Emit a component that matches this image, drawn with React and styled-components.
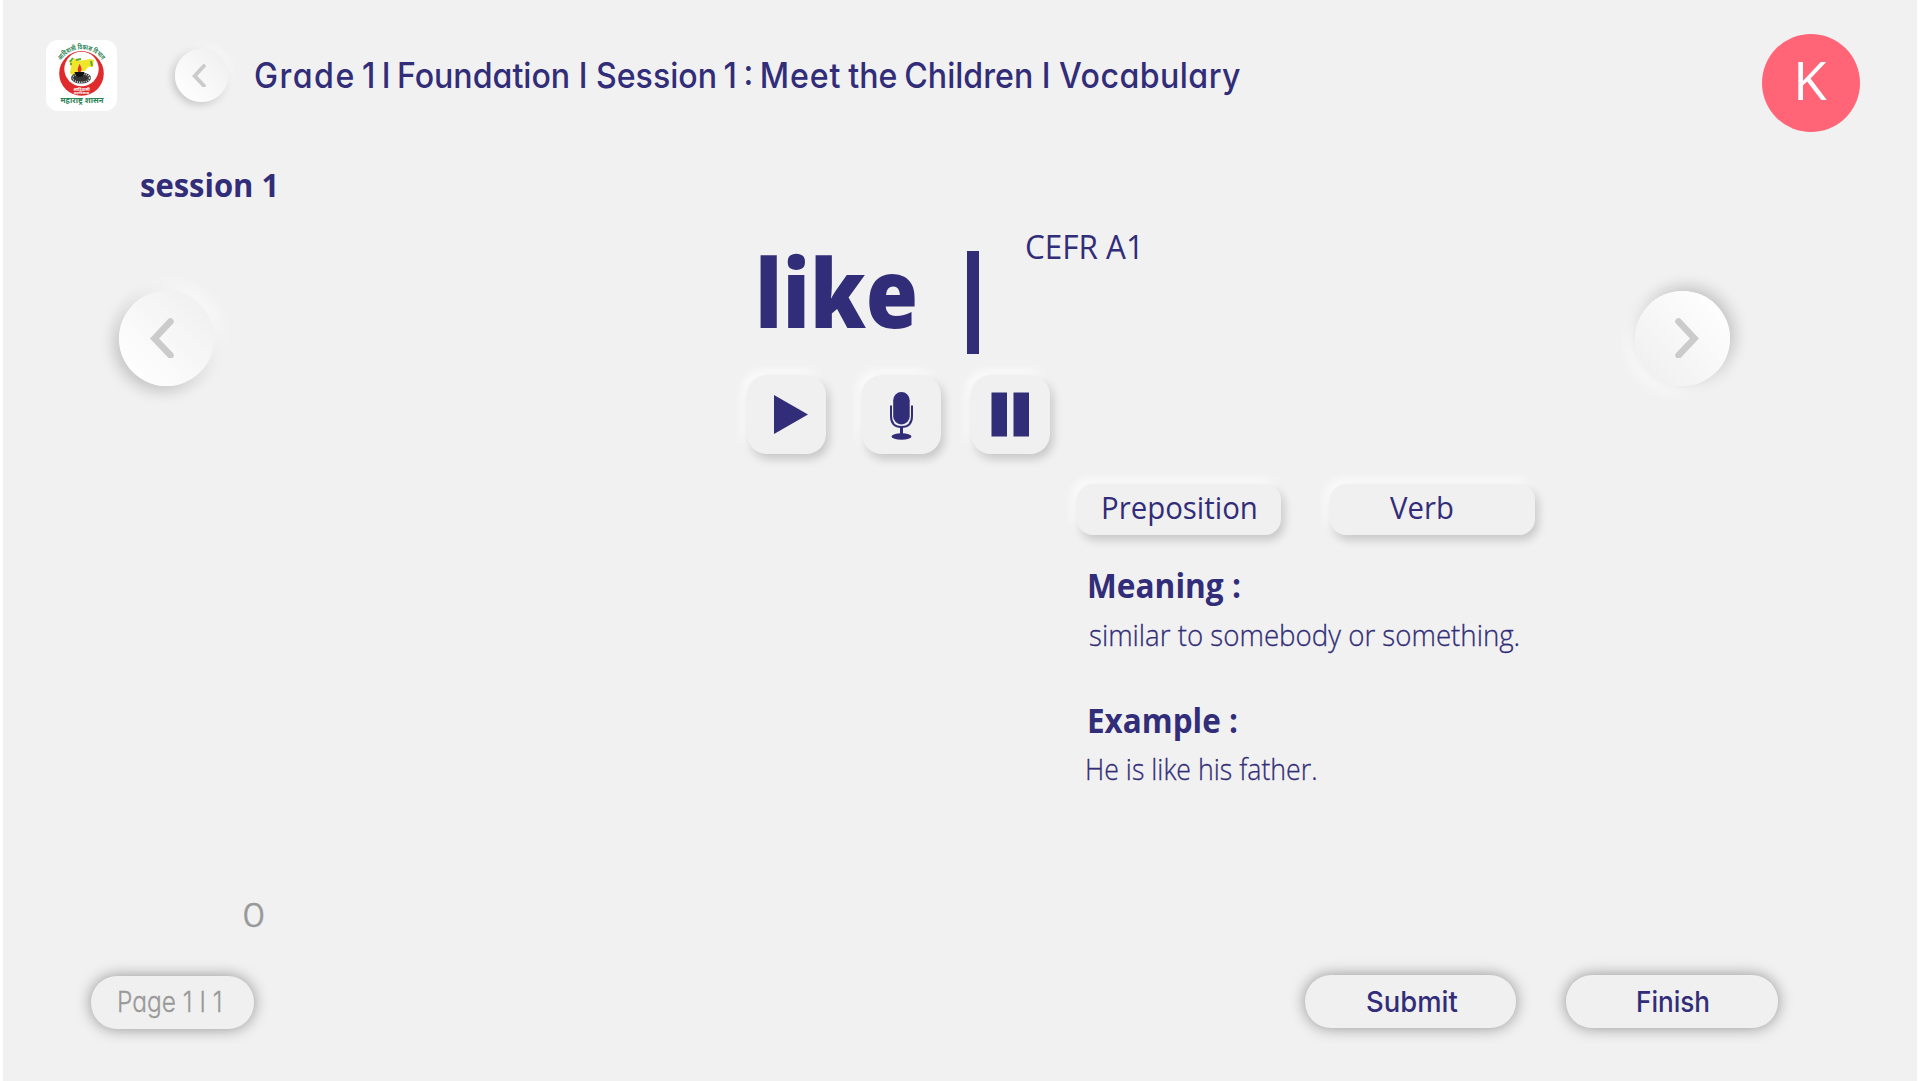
import React from "react";
import styled, { createGlobalStyle, css } from "styled-components";

const ink = "#322d78";
const paper = "#f1f1f1";
const human = `"Open Sans", "Noto Sans", sans-serif`;
const geometric = `Inter, "Open Sans", sans-serif`;

const Global = createGlobalStyle`
  * { box-sizing: border-box; }
  html, body { margin: 0; background: #fff; }
  button { border: 0; padding: 0; margin: 0; background: none; font: inherit; color: inherit; }
`;

const Page = styled.main`
  width: 1920px;
  height: 1081px;
  padding: 0 3px;
  background: #fff;
  overflow: hidden;
`;
const Stage = styled.div`
  height: 100%;
  background: ${paper};
  color: ${ink};
  display: flex;
  flex-direction: column;
`;

const Text = styled.span`
  display: block;
  width: max-content;
  white-space: pre;
  font-family: ${(p) => (p.$geo ? geometric : human)};
  font-feature-settings: ${(p) => (p.$geo ? `"cv11"` : "normal")};
  font-size: ${(p) => p.$size}px;
  font-weight: ${(p) => p.$weight || 400};
  line-height: ${(p) => p.$line || 40}px;
  transform: scaleX(${(p) => p.$stretch || 1});
  transform-origin: left center;
  margin: ${(p) => p.$margin || 0};
  -webkit-text-stroke: ${(p) => (p.$weight === 300 ? "0.3px currentColor" : "0")};
`;
const Run = styled.span`
  letter-spacing: ${(p) => p.$letter || 0}px;
  word-spacing: ${(p) => p.$word || 0}px;
`;

const Header = styled.header`
  height: 165px;
  flex: none;
  display: flex;
  align-items: flex-start;
  padding: 40px 57px 0 43px;
`;
const LogoCard = styled.div`
  width: 71px;
  height: 71px;
  border-radius: 12px;
  background: #fff;
`;
const Avatar = styled.div`
  width: 98px;
  height: 98px;
  margin: -6px 0 0 auto;
  border-radius: 50%;
  background: #ff6577;
  color: #fff;
  display: flex;
  padding: 14px 0 0 31px;
`;

const Round = styled.button`
  width: ${(p) => p.$d}px;
  height: ${(p) => p.$d}px;
  flex: none;
  border-radius: 50%;
  margin: ${(p) => p.$margin};
  padding: ${(p) => p.$nudge || 0};
  display: flex;
  align-items: center;
  justify-content: center;
  ${(p) =>
    p.$next
      ? css`
          background: linear-gradient(45deg, #f1f1f1 15%, #fefefe 85%);
          box-shadow: 4px -4px 16px rgba(0, 0, 0, 0.2), -6px 6px 14px rgba(255, 255, 255, 0.8);
        `
      : css`
          background: linear-gradient(45deg, #fefefe 15%, #f1f1f1 85%);
          box-shadow: ${p.$d < 60 ? "3px -3px 8px" : "6px -6px 14px"} rgba(255, 255, 255, 0.7),
            ${p.$d < 60 ? "-2px 2px 9px" : "-4px 4px 16px"} rgba(0, 0, 0, 0.22);
        `}
`;

const Body = styled.section`
  display: flex;
  align-items: flex-start;
  height: 690px;
  flex: none;
`;
const Center = styled.div`
  width: 888px;
  margin-left: 533.5px;
`;
const WordRow = styled.div`
  display: flex;
  height: 170.3px;
`;
const Word = styled.div`
  width: 220.3px;
  padding: 31px 0 0 8px;
`;
const Bar = styled.div`
  width: 11.7px;
  height: 102.4px;
  margin-top: 46.3px;
  background: ${ink};
`;
const Level = styled.div`
  padding: 22px 0 0 46.5px;
`;
const Tools = styled.div`
  display: flex;
`;
const raised = css`
  background: #f0f0f0;
  box-shadow: 3px 5px 10px rgba(0, 0, 0, 0.18), -4px -4px 11px rgba(255, 255, 255, 0.9);
`;
const Tool = styled.button`
  width: 79px;
  height: 79px;
  border-radius: 20px;
  margin-right: ${(p) => p.$gap || 0}px;
  ${raised}
  svg { display: block; }
`;
const Pills = styled.div`
  display: flex;
  gap: 49px;
  margin: 29.5px 0 0 329.5px;
`;
const Pill = styled.button`
  width: 204.5px;
  height: 51px;
  border-radius: 16px;
  padding: 0 0 4.4px ${(p) => p.$pad}px;
  ${raised}
`;
const Details = styled.div`
  margin: 28px 0 0 339.5px;
`;
const Footer = styled.footer`
  display: flex;
  margin-top: 40px;
  padding-left: 88px;
`;
const Capsule = styled.button`
  width: ${(p) => p.$w}px;
  height: 53px;
  border-radius: 26px;
  margin: ${(p) => (p.$muted ? 1 : 0)}px 0 0 ${(p) => p.$gap || 0}px;
  padding: 0 0 ${(p) => (p.$muted ? 2 : 0)}px ${(p) => p.$pad}px;
  color: ${(p) => (p.$muted ? "#999" : ink)};
  background: #f0f0f0;
  box-shadow: 0 0 15px rgba(0, 0, 0, 0.4);
`;
const Counter = styled.div`
  color: #999;
  padding: 0 0 0 238.5px;
`;

function Chevron({ w, next }) {
  return (
    <svg width={w} height={w * 1.7} viewBox="0 0 24 41" fill="none">
      <path
        d={next ? "M3.5 3.5 L19.5 20.5 L3.5 37.5" : "M20.5 3.5 L4.5 20.5 L20.5 37.5"}
        stroke="#cbcbcb" strokeWidth="6.6" strokeLinecap="round"
      />
    </svg>
  );
}

function Logo() {
  return (
    <svg width="71" height="71" viewBox="0 0 71 71">
      <defs><path id="arc" d="M15 20.500 A24.500 24.500 0 0 1 56 20.500" /></defs>
      <circle cx="35.5" cy="33.4" r="22.3" fill="#df2b2b" />
      <circle cx="35.5" cy="29" r="17.2" fill="#fff" />
      <path d="M23 20 L27 21 L28 18 L33 21 L44 19 L48 20 L47 27 L42 27 L39 31 L32 32 L27 36 L24 33 L25 27 Z" fill="#efe62a" />
      <path d="M24 22 L27 18 M30 20 L35 19 M45 21 L46 26 M24 24 L26 24" stroke="#5ea83a" strokeWidth="2" />
      <ellipse cx="35" cy="38" rx="10" ry="5.500" fill="#333" />
      <ellipse cx="35" cy="38" rx="8.500" ry="4.200" fill="none" stroke="#ddd" strokeWidth="1.600" strokeDasharray="1 1.200" />
      <path d="M28.500 32 H38.500 Q37.500 37 33.500 37 Q29.500 37 28.500 32 Z" fill="#111" />
      <path d="M33.500 24 Q37 29 34.500 32 H32 Q31 29 33.500 24 Z" fill="#e6342b" />
      <text fontFamily='"Noto Sans", sans-serif' fontSize="7" fontWeight="700" fill="#2a8354">
        <textPath href="#arc" textLength="48" lengthAdjust="spacingAndGlyphs">आदिवासी विकास विभाग</textPath>
      </text>
      <text x="35.500" y="50.500" textAnchor="middle" fontFamily='"Noto Sans", sans-serif' fontSize="4.2" fontWeight="700" fill="#fff">आदिवासी</text>
      <text x="35.500" y="54.200" textAnchor="middle" fontFamily='"Noto Sans", sans-serif' fontSize="3.600" fontWeight="700" fill="#fff">महाविकास</text>
      <text x="14.500" y="62.500" textLength="43" lengthAdjust="spacingAndGlyphs" fontFamily='"Noto Sans", sans-serif' fontSize="8" fontWeight="700" fill="#2a8354">महाराष्ट्र शासन</text>
    </svg>
  );
}

export default function App() {
  return (
    <Page>
      <Global />
      <Stage>
        <Header>
          <LogoCard><Logo /></LogoCard>
          <Round $d={53} $margin="9px 0 0 57.5px" $nudge="0 5px 0 0"><Chevron w={14} /></Round>
          <Text $geo $size={35} $weight={500} $line={44} $stretch={0.9175} $margin="13px -100px 0 26.500px">
            <Run $letter={1.6}>Grade</Run>
            <Run $word={-2.4}>{" 1 I "}</Run>
            <Run>Foundation I Session</Run>
            <Run $word={-2.2}>{" 1 : "}</Run>
            <Run $letter={1}>Meet</Run>
            <Run $word={-1.8}>{" the "}</Run>
            <Run>{"Children I "}</Run>
            <Run $letter={0.5}>Vocabulary</Run>
          </Text>
          <Avatar><Text $size={53} $weight={500} $line={64} $stretch={1.04}>K</Text></Avatar>
        </Header>
        <Text $size={33} $weight={700} $stretch={0.938} $margin="0 0 0 136.500px">session 1</Text>
        <Body>
          <Round $d={95} $margin="85.500px 0 0 115.500px" $nudge="0 9px 0 0"><Chevron w={24} /></Round>
          <Center>
            <WordRow>
              <Word><Text $size={96} $weight={800} $line={110} $stretch={0.883}>like</Text></Word>
              <Bar />
              <Level><Text $size={33} $stretch={0.953}>CEFR A1</Text></Level>
            </WordRow>
            <Tools>
              <Tool $gap={36}>
                <svg width="79" height="79"><path d="M27 20 L61 39.500 L27 59 Z" fill={ink} /></svg>
              </Tool>
              <Tool $gap={30}>
                <svg width="79" height="79" fill="none" stroke={ink}>
                  <rect x="31.200" y="17" width="16.500" height="32.500" rx="8.200" fill={ink} stroke="none" />
                  <path d="M29 30.500 V41 Q29 52 39.500 52 Q50 52 50 41 V30.500" strokeWidth="2" />
                  <path d="M39.500 52 V60" strokeWidth="3" />
                  <ellipse cx="39.500" cy="61.500" rx="10" ry="3.200" fill={ink} stroke="none" />
                </svg>
              </Tool>
              <Tool>
                <svg width="79" height="79" fill={ink}><path d="M20.500 17.500 H36 V61.500 H20.500 Z M42.500 17.500 H58 V61.500 H42.500 Z" /></svg>
              </Tool>
            </Tools>
            <Pills>
              <Pill $pad={24}><Text $size={31} $weight={500} $stretch={0.948}>Preposition</Text></Pill>
              <Pill $pad={60}><Text $size={31} $weight={500} $stretch={0.945}>Verb</Text></Pill>
            </Pills>
            <Details>
              <Text $size={34} $weight={700} $line={44} $stretch={0.93}>Meaning :</Text>
              <Text $size={29} $weight={300} $stretch={0.954} $margin="8px 0 43px 2px">similar to somebody or something.</Text>
              <Text $size={34} $weight={700} $line={44} $stretch={0.925}>Example :</Text>
              <Text $size={29} $weight={300} $stretch={0.922} $margin="7px 0 0 -2px">He is like his father.</Text>
            </Details>
          </Center>
          <Round $next $d={95} $margin="85.500px 0 0" $nudge="0 0 0 8.500px"><Chevron next w={24} /></Round>
        </Body>
        <Counter><Text $geo $size={33} $weight={300} $stretch={1.15}>0</Text></Counter>
        <Footer>
          <Capsule $w={162.5} $pad={25.5} $muted><Text $geo $size={29} $weight={300} $stretch={0.845}>Page 1 I 1</Text></Capsule>
          <Capsule $w={211.5} $gap={1051} $pad={61.5}><Text $geo $size={29} $weight={500} $stretch={0.945}>Submit</Text></Capsule>
          <Capsule $w={211.5} $gap={50} $pad={70}><Text $geo $size={29} $weight={500} $stretch={0.9}>Finish</Text></Capsule>
        </Footer>
      </Stage>
    </Page>
  );
}
